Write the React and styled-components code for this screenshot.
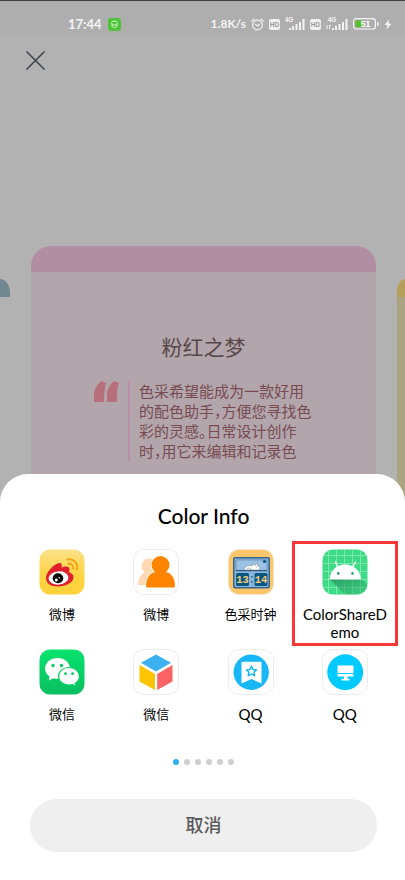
import React from "react";
import styled, { createGlobalStyle } from "styled-components";

const GlobalStyle = createGlobalStyle`
  *, *::before, *::after { box-sizing: border-box; }
  body {
    margin: 0;
    background: #b2b2b2;
    font-family: Lato, "Noto Sans CJK SC", sans-serif;
  }
  button { font: inherit; border: 0; padding: 0; background: none; cursor: pointer; }
  p, h1, h2, ul { margin: 0; padding: 0; }
  svg { display: block; flex: none; }
`;

const Screen = styled.main`
  display: flex;
  flex-direction: column;
  min-height: 100vh;
  background: #b2b2b2;
`;

const StatusBar = styled.header`
  display: flex;
  align-items: center;
  height: 35px;
  padding: 12px 13px 0 68px;
  border-top: 1px solid #41414b;
  background: #aeaeae;
  color: #f4f4f4;
  font-size: 13px;
  font-weight: 700;
  line-height: 20px;
`;

const Clock = styled.time`
  margin-right: 6px;
`;

const StatusGroup = styled.div`
  display: flex;
  align-items: center;
  gap: 5px;
  margin-left: auto;
`;

const Speed = styled.span`
  font-size: 12px;
`;

const NavBar = styled.nav`
  padding: 16px 26px;
`;

const CloseButton = styled.button`
  display: block;
  color: #39434e;
`;

const Carousel = styled.section`
  display: grid;
  grid-template-columns: 10px 1fr 8px;
  gap: 21px;
  margin-top: 160px;
`;

const SideCard = styled.div`
  margin-top: 33px;
  overflow: hidden;
  border-radius: ${(p) => (p.$side === "left" ? "0 10px 0 0 / 0 14px 0 0" : "8px 0 0 0 / 12px 0 0 0")};
  border-top: 18px solid ${(p) => p.$accent};
  background: ${(p) => p.$body};
`;

const Card = styled.article`
  overflow: hidden;
  border-radius: 20px 20px 0 0;
  border-top: 26px solid #b18ea2;
  background: #b2a6ac;
  padding: 60px 0 43px 63px;
`;

const CardTitle = styled.h1`
  margin-right: 63px;
  color: #594649;
  font-size: 21px;
  font-weight: 400;
  line-height: 30px;
  text-align: center;
`;

const Quote = styled.div`
  display: flex;
  align-items: flex-start;
  gap: 9px;
  margin-top: 19px;
`;

const QuoteText = styled.p`
  padding-left: 9px;
  border-left: 2px solid #b78ea5;
  color: #784a50;
  font-size: 15px;
  line-height: 20px;
  white-space: nowrap;
  font-feature-settings: "halt";
`;

const Sheet = styled.section`
  position: relative;
  flex: 1;
  margin-top: -30px;
  padding: 27px 13px 28px 15px;
  border-radius: 28px 28px 0 0;
  background: #fff;
  color: #000;
`;

const SheetTitle = styled.h2`
  font-size: 21px;
  font-weight: 500;
  line-height: 30px;
  text-align: center;
`;

const AppGrid = styled.ul`
  display: grid;
  grid-template-columns: repeat(4, 1fr);
  row-gap: 8px;
  margin-top: 18px;
  list-style: none;
`;

const AppItem = styled.li`
  position: relative;
`;

const AppButton = styled.button`
  display: flex;
  flex-direction: column;
  align-items: center;
  gap: 10px;
  width: 100%;
  color: #000;
`;

const AppLabel = styled.span`
  max-width: 86px;
  font-size: ${(p) => (p.$latin ? "15px" : "13px")};
  line-height: 18px;
  text-align: center;
  word-break: break-all;
`;

const Highlight = styled.span`
  position: absolute;
  inset: -8px -6px -5px;
  border: 3px solid #fa3737;
  pointer-events: none;
`;

const Pager = styled.div`
  display: flex;
  justify-content: center;
  gap: 5px;
  margin-top: 36px;
`;

const Dot = styled.span`
  width: 6px;
  height: 6px;
  border-radius: 50%;
  background: ${(p) => (p.$active ? "#2bb0f5" : "#cfcfcf")};
`;

const CancelButton = styled.button`
  display: block;
  width: calc(100% - 30px);
  height: 53px;
  margin: 34px auto 0;
  border-radius: 27px;
  background: #efefef;
  color: #5a5a5a;
  font-size: 18px;
  font-weight: 500;
  line-height: 53px;
`;

const SvgText = styled.text`
  font-family: ${(p) => (p.$mono ? '"Liberation Mono", monospace' : '"Liberation Sans", sans-serif')};
  font-size: ${(p) => p.$size}px;
  font-weight: ${(p) => (p.$bold ? 700 : 400)};
  text-anchor: middle;
`;

const GreenBadge = () => (
  <svg width="13" height="13" viewBox="0 0 13 13" fill="none">
    <rect width="13" height="13" rx="3" fill="#4fc43a" />
    <path d="M3.5 4.2l1-.9h4l1 .9M3.2 5.5l1.8.8M9.8 5.5l-1.8.8M3.4 7h6.2M4 7.4c0 3 5 3 5 0" stroke="#e6ffe0" strokeWidth=".9" />
  </svg>
);

const AlarmIcon = () => (
  <svg width="13" height="13" viewBox="0 0 13 13" fill="none" stroke="#f4f4f4" strokeWidth="1.1" strokeLinecap="round">
    <circle cx="6.5" cy="7" r="4.9" />
    <path d="M.7 3.2L3.1 1M12.3 3.2L9.9 1M4.5 6.3l2 1.7 2.1-1.7" />
  </svg>
);

const HdIcon = () => (
  <svg width="11" height="11" viewBox="0 0 11 11">
    <rect width="11" height="11" rx="2" fill="#f0f0f0" />
    <SvgText x="5.5" y="8" $size={6.5} $bold fill="#9a9a9a">HD</SvgText>
  </svg>
);

const SignalIcon = ({ data }) => (
  <svg width={data ? 22 : 20} height="14" viewBox={data ? "-2 -1 22 14" : "0 -1 20 14"} fill="#f4f4f4">
    <SvgText x="4" y="4" $size={6.5} $bold>4G</SvgText>
    <rect x="4" y="10" width="2" height="2" />
    <rect x="7" y="8" width="2" height="4" />
    <rect x="10.5" y="6" width="2" height="6" />
    <rect x="14" y="4" width="2" height="8" />
    <rect x="17.5" y="1" width="2" height="11" />
    {data && <path d="M-1.5 7h1v4h-1zM1 7h1v4H1zM1 7h2v1H1z" />}
  </svg>
);

const BatteryIcon = () => (
  <svg width="26" height="12" viewBox="0 0 26 12">
    <rect x=".6" y=".6" width="21.8" height="10.4" rx="2.5" fill="none" stroke="#f4f4f4" strokeWidth="1.2" />
    <path d="M2.5 2.5h8v6.6h-8z" fill="#59bd28" />
    <rect x="24" y="4" width="1.5" height="4" rx=".7" fill="#f4f4f4" />
    <SvgText x="12.5" y="9" $size={8.5} $bold fill="#fff">51</SvgText>
  </svg>
);

const BoltIcon = () => (
  <svg width="8" height="11" viewBox="0 0 8 11" fill="#f4f4f4">
    <path d="M5.2.5L.5 6h2.8L2.6 10.5 7.5 4.7H4.6z" />
  </svg>
);

const CloseIcon = () => (
  <svg width="19" height="19" viewBox="0 0 19 19" stroke="currentColor" strokeWidth="1.5">
    <path d="M.5.5l18 18M18.5.5l-18 18" />
  </svg>
);

const QuoteMark = () => (
  <svg width="25" height="21" viewBox="0 0 25 21" fill="#b76f7a">
    <path d="M0 21V11.5C1 7 3.5 3 7.5 0l4.8 2.2C10.5 6 10.3 12 10 21z" />
    <path d="M13 21V11.5C14 7 16.5 3 20.3 0L25 2.2C23.3 6 23.1 12 22.8 21z" />
  </svg>
);

const Tile = ({ fill = "#fff", stroke = "#ececec", children }) => (
  <svg width="46" height="46" viewBox="0 0 46 46">
    <rect x=".5" y=".5" width="45" height="45" rx="10.5" fill={fill} stroke={stroke} />
    {children}
  </svg>
);

const WeiboIcon = () => (
  <Tile fill="url(#weiboBg)" stroke="none">
    <defs>
      <linearGradient id="weiboBg" x1="0" y1="0" x2="0" y2="1">
        <stop offset="0" stopColor="#fce18a" />
        <stop offset=".6" stopColor="#fed33f" />
        <stop offset="1" stopColor="#ffd23a" />
      </linearGradient>
    </defs>
    <path d="M7 29c0-6 8-14 13-15 3 0 3 2 2.5 4.5 3-1.5 8.5-2 8 2-.2 1.5-.7 2.5-.4 2.8 2 .8 4.4 2 4.4 5C34.5 33.5 27 37.5 19 37.5S7 34 7 29z" fill="#e0202c" />
    <ellipse cx="19.5" cy="29" rx="10" ry="6.6" fill="#fff" transform="rotate(-5 19.5 29)" />
    <ellipse cx="19" cy="29.3" rx="5.3" ry="5" fill="#090909" />
    <circle cx="17.3" cy="31" r="1.5" fill="#fff" />
    <circle cx="20.3" cy="28.8" r=".8" fill="#fff" />
    <g fill="none" stroke="#f6a10c" strokeWidth="1.9" strokeLinecap="round">
      <path d="M28.5 10.5c6-1.5 11 4 9.3 10" />
      <path d="M29.5 14.8c3-.6 5 2 4.4 4.7" />
    </g>
  </Tile>
);

const FriendsIcon = () => (
  <Tile>
    <g fill="#ffd9b3">
      <circle cx="16" cy="17" r="7.5" />
      <path d="M5 36c0-7 3-11 7-13l6 1-5 12z" />
    </g>
    <g fill="#ff8500" stroke="#fff" strokeWidth="1.5" paintOrder="stroke">
      <path d="M13 37.5c0-9 4-13.5 9.5-15h10C38 24 42 29 42 36.5c0 1-.5 2-1.5 2H14z" />
      <circle cx="27.5" cy="16" r="9" />
    </g>
    <path d="M22 22h11v4H22z" fill="#ff8500" />
  </Tile>
);

const FlipClockIcon = () => (
  <Tile fill="#fec66b" stroke="#f4e4ca">
    <rect x="5" y="8" width="37" height="31.5" rx="2" fill="#35658b" />
    <rect x="6.5" y="9.5" width="34" height="28.5" rx="1" fill="#8bb7df" />
    <path d="M8 11h31v11H8z" fill="#9bc2e5" stroke="#4d7ba3" strokeWidth=".6" />
    <path d="M8 21h31v1H8z" fill="#29567a" />
    <circle cx="36.5" cy="12.5" r="1.6" fill="#0a527b" />
    <path d="M16 21c0-3 4-5.500 8-4l1-3 2 2.5 2-3 .5 3c2.5.5 3 3.5 1.5 4.5z" fill="#fff" stroke="#64747f" strokeWidth=".5" />
    <path d="M19 19.5c2-1 4 0 4 1.5M28 18h1" fill="none" stroke="#64747f" strokeWidth=".6" />
    <rect x="8" y="24" width="13" height="13" rx="1.5" fill="#09577e" />
    <rect x="26.5" y="24" width="13" height="13" rx="1.5" fill="#09577e" />
    <SvgText x="14.5" y="34.3" $size={10.5} $mono $bold fill="#f5ce80">13</SvgText>
    <SvgText x="33" y="34.3" $size={10.5} $mono $bold fill="#f5ce80">14</SvgText>
    <path d="M23 27h1.5v1.5H23zM23 32h1.5v1.5H23z" fill="#29567a" />
  </Tile>
);

const AndroidIcon = () => (
  <Tile fill="#3ddb85" stroke="none">
    <defs>
      <clipPath id="tileClip"><rect x=".5" y=".5" width="45" height="45" rx="10.5" /></clipPath>
      <linearGradient id="longShadow" x1="0" y1="0" x2="1" y2="1">
        <stop offset="0" stopColor="#248b58" stopOpacity=".8" />
        <stop offset="1" stopColor="#2fae6c" stopOpacity=".25" />
      </linearGradient>
    </defs>
    <g clipPath="url(#tileClip)">
      <path d="M6.5 0v46M14.5 0v46M22.5 0v46M30.5 0v46M38.5 0v46M0 6.5h46M0 14.5h46M0 22.5h46M0 30.5h46M0 38.5h46" stroke="#87e8b3" strokeWidth=".9" />
      <path d="M7.5 30L39 30 46 37V46H23.5z" fill="url(#longShadow)" />
      <path d="M7.5 30.5C8 22 14.5 15.5 23.2 15.5S38.5 22 39 30.5z" fill="#fff" />
      <path d="M16 18.5L13.5 13M30.5 18.5L33.5 13" stroke="#fff" strokeWidth="1.4" strokeLinecap="round" />
      <circle cx="16.3" cy="24.5" r="1.4" fill="#3ba56e" />
      <circle cx="30.5" cy="24.5" r="1.4" fill="#3ba56e" />
    </g>
  </Tile>
);

const WechatIcon = () => (
  <Tile fill="url(#wechatBg)" stroke="none">
    <defs>
      <linearGradient id="wechatBg" x1="0" y1="0" x2="0" y2="1">
        <stop offset="0" stopColor="#07e36e" />
        <stop offset="1" stopColor="#09bf60" />
      </linearGradient>
    </defs>
    <path d="M18.5 9C11.5 9 6 13.7 6 19.5c0 3.2 1.7 6 4.5 7.9L9.8 31.5l4.6-2.3c1.3.4 2.7.6 4.1.6C25.5 29.8 31 25.3 31 19.5S25.5 9 18.5 9z" fill="#fff" />
    <path d="M30 18.5c-6 0-10.5 4-10.5 8.9S24 36 30 36c1.2 0 2.3-.1 3.4-.5l3.6 2-.7-3.3c2.5-1.6 4.2-4 4.2-6.8 0-4.9-4.5-8.9-10.500-8.900z" fill="#fff" stroke="#08cf66" strokeWidth="1.2" />
    <g fill="#08ca63">
      <circle cx="14" cy="16.5" r="1.7" />
      <circle cx="22.5" cy="16.5" r="1.7" />
      <circle cx="26.5" cy="24.7" r="1.4" />
      <circle cx="33.5" cy="24.7" r="1.4" />
    </g>
  </Tile>
);

const CubeIcon = () => (
  <Tile>
    <path d="M23 5.5l15 8.3-15 8.7-15-8.7z" fill="#3eb1f1" />
    <path d="M6.5 16l15.5 9v16L6.5 32.5z" fill="#ffc400" />
    <path d="M39.5 16L24.2 25v16l15.3-8.5z" fill="#fb6364" />
  </Tile>
);

const FavoriteIcon = () => (
  <Tile>
    <circle cx="23.2" cy="23.2" r="17.7" fill="#17b6f6" />
    <path d="M13.5 14c0-.8.5-1.3 1.3-1.3h17.4c.8 0 1.3.5 1.3 1.3v20.5l-10-4.5-10 4.5z" fill="#fff" />
    <path d="M23.4 17.3l1.5 3.1 3.5.5-2.5 2.4.6 3.4-3.1-1.6-3.1 1.6.6-3.4-2.5-2.4 3.5-.5z" fill="none" stroke="#17b6f6" strokeWidth="1.5" strokeLinejoin="round" />
  </Tile>
);

const ComputerIcon = () => (
  <Tile>
    <circle cx="23.2" cy="23.2" r="17.9" fill="#00caff" />
    <path d="M15.5 16.5h16v7.5h-16zM15.5 25h16v2.5h-16zM22 27.5h3.5v2.3H22zM19.5 29.8h8v1.7h-8z" fill="#fff" />
  </Tile>
);

const apps = [
  { id: "weibo", label: "微博", Icon: WeiboIcon },
  { id: "weibo-friends", label: "微博", Icon: FriendsIcon },
  { id: "color-clock", label: "色采时钟", Icon: FlipClockIcon },
  { id: "color-share", label: "ColorShareDemo", Icon: AndroidIcon, latin: true, highlighted: true },
  { id: "wechat", label: "微信", Icon: WechatIcon },
  { id: "wechat-favorites", label: "微信", Icon: CubeIcon },
  { id: "qq-favorites", label: "QQ", Icon: FavoriteIcon, latin: true },
  { id: "qq-computer", label: "QQ", Icon: ComputerIcon, latin: true },
];

const pages = [0, 1, 2, 3, 4, 5];

export default function App() {
  return (
    <>
      <GlobalStyle />
      <Screen>
        <StatusBar>
          <Clock>17:44</Clock>
          <GreenBadge />
          <StatusGroup>
            <Speed>1.8K/s</Speed>
            <AlarmIcon />
            <HdIcon />
            <SignalIcon />
            <HdIcon />
            <SignalIcon data />
            <BatteryIcon />
            <BoltIcon />
          </StatusGroup>
        </StatusBar>
        <NavBar>
          <CloseButton type="button" aria-label="关闭">
            <CloseIcon />
          </CloseButton>
        </NavBar>
        <Carousel>
          <SideCard $side="left" $accent="#728890" $body="#b2b2b2" />
          <Card>
            <CardTitle>粉红之梦</CardTitle>
            <Quote>
              <QuoteMark />
              <QuoteText>
                色采希望能成为一款好用<br />
                的配色助手，方便您寻找色<br />
                彩的灵感。日常设计创作<br />
                时，用它来编辑和记录色
              </QuoteText>
            </Quote>
          </Card>
          <SideCard $side="right" $accent="#b5a05b" $body="#aaa483" />
        </Carousel>
        <Sheet>
          <SheetTitle>Color Info</SheetTitle>
          <AppGrid>
            {apps.map(({ id, label, Icon, latin, highlighted }) => (
              <AppItem key={id}>
                <AppButton type="button">
                  <Icon />
                  <AppLabel $latin={latin}>{label}</AppLabel>
                </AppButton>
                {highlighted && <Highlight />}
              </AppItem>
            ))}
          </AppGrid>
          <Pager>
            {pages.map((page) => (
              <Dot key={page} $active={page === 0} />
            ))}
          </Pager>
          <CancelButton type="button">取消</CancelButton>
        </Sheet>
      </Screen>
    </>
  );
}
